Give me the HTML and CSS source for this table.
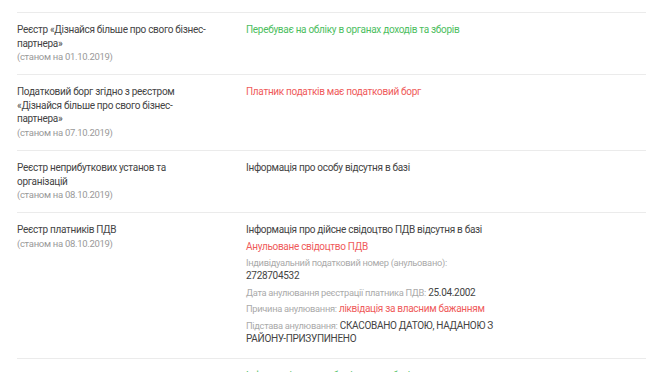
FILE: index.html
```html
<!DOCTYPE html>
<html lang="uk">
<head>
<meta charset="utf-8">
<link rel="stylesheet" href="styles.css">
</head>
<body>
<div class="table">
  <div class="row">
    <div class="name">Реєстр «Дізнайся більше про свого бізнес-партнера»<div class="date">(станом на 01.10.2019)</div></div>
    <div class="value"><div class="item green">Перебуває на обліку в органах доходів та зборів</div></div>
  </div>
  <div class="row">
    <div class="name">Податковий борг згідно з реєстром «Дізнайся більше про свого бізнес-партнера»<div class="date">(станом на 07.10.2019)</div></div>
    <div class="value"><div class="item red">Платник податків має податковий борг</div></div>
  </div>
  <div class="row">
    <div class="name">Реєстр неприбуткових установ та організацій<div class="date">(станом на 08.10.2019)</div></div>
    <div class="value"><div class="item">Інформація про особу відсутня в базі</div></div>
  </div>
  <div class="row">
    <div class="name">Реєстр платників ПДВ<div class="date">(станом на 08.10.2019)</div></div>
    <div class="value">
      <div class="item">Інформація про дійсне свідоцтво ПДВ відсутня в базі</div>
      <div class="item red">Анульоване свідоцтво ПДВ</div>
      <div class="item"><span class="label">Індивідуальний податковий номер (анульовано):</span> 2728704532</div>
      <div class="item"><span class="label">Дата анулювання реєстрації платника ПДВ:</span> 25.04.2002</div>
      <div class="item"><span class="label">Причина анулювання:</span> <span class="red">ліквідація за власним бажанням</span></div>
      <div class="item"><span class="label">Підстава анулювання:</span> СКАСОВАНО ДАТОЮ, НАДАНОЮ З РАЙОНУ-ПРИЗУПИНЕНО</div>
    </div>
  </div>
  <div class="row">
    <div class="name"></div>
    <div class="value"><div class="item green">Інформація про особу відсутня в базі</div></div>
  </div>
</div>
</body>
</html>
```
FILE: styles.css
```css
html, body {
  margin: 0;
  padding: 0;
  background: #fff;
}
body {
  font-family: Roboto, "Liberation Sans", sans-serif;
  font-size: 10px;
  letter-spacing: -0.3px;
  color: #444;
  overflow: hidden;
  height: 372px;
}
.table {
  margin: 12px 19px 0 17px;
}
.row {
  display: grid;
  grid-template-columns: 229px 252px;
  border-top: 1px solid #ebebeb;
  padding: 10px 0 10px;
  line-height: 13.6px;
}
.name {
  padding-right: 34px;
}
.date {
  color: #999;
  font-size: 9.5px;
  line-height: 14px;
}
.item {
  line-height: 13.3px;
  margin-bottom: 3.2px;
}
.item:last-child {
  margin-bottom: 0;
}
.value {
  padding-bottom: 3px;
}
.label {
  color: #aaa;
  font-size: 9.3px;
}
.green {
  color: #4cbe5e;
}
.red {
  color: #ef5b5b;
}
```
